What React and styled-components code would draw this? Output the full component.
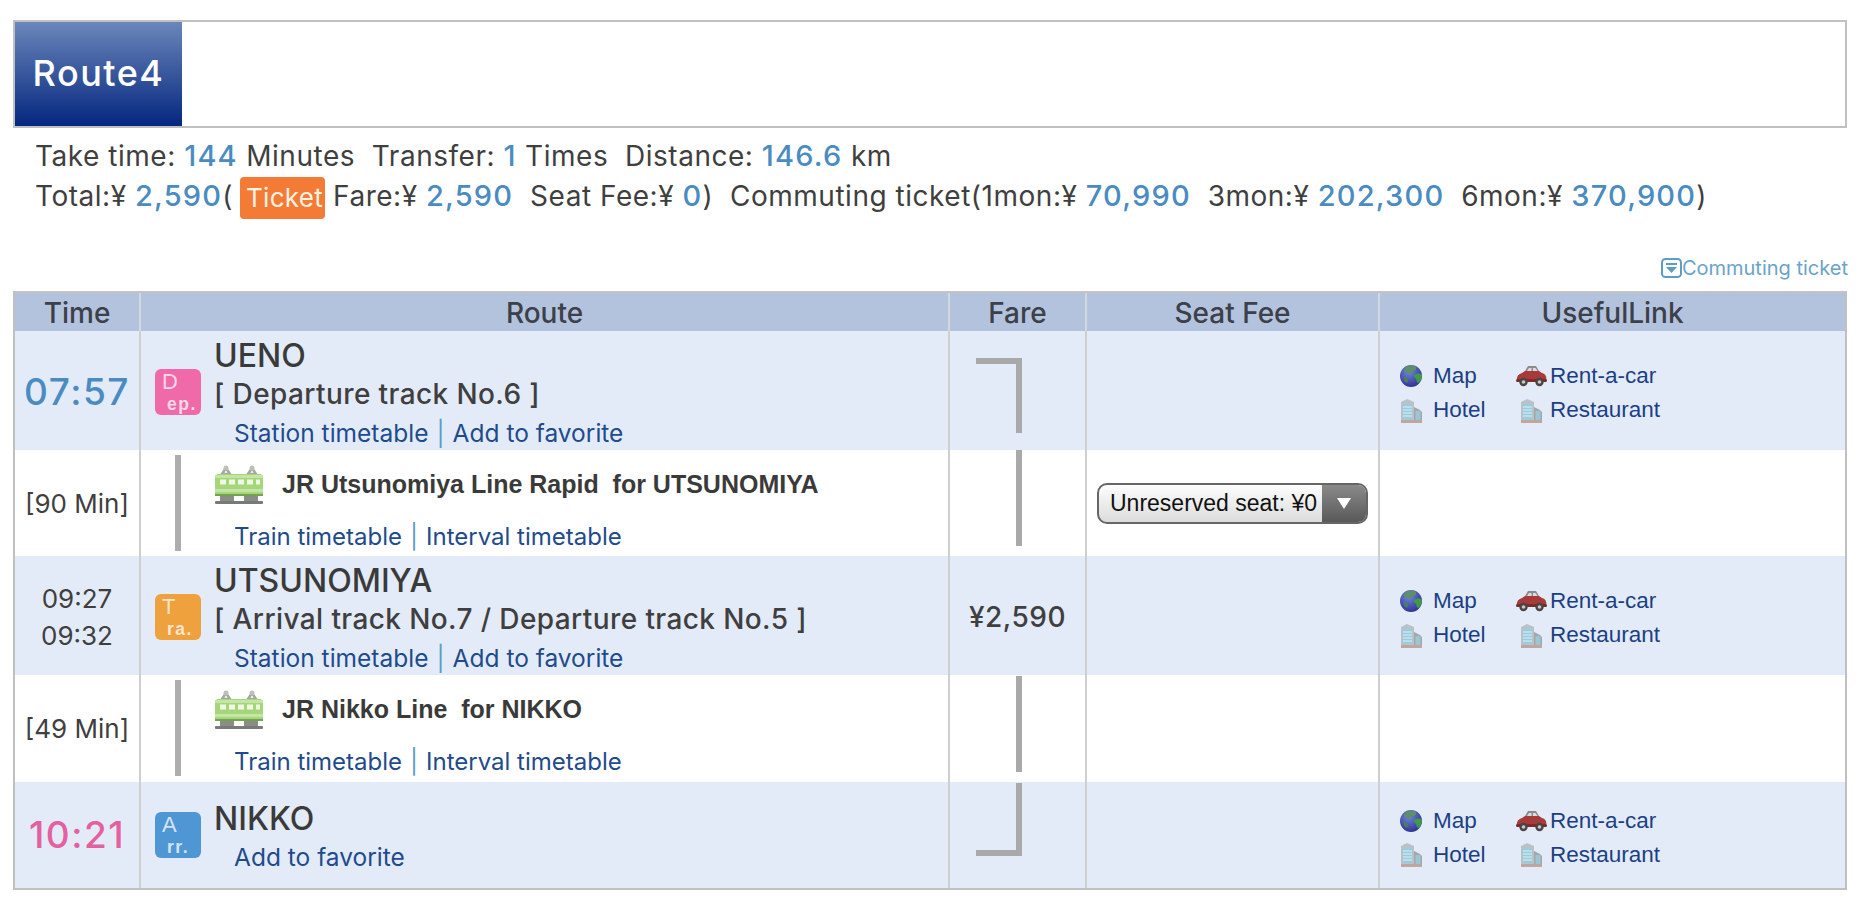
import styled, { createGlobalStyle } from "styled-components";

const GlobalStyle = createGlobalStyle`
  html, body {
    margin: 0;
    background: #fff;
  }
  body {
    font-family: Inter, "Noto Sans", "Noto Sans CJK JP", sans-serif;
    color: #3f3f3f;
  }
`;

const Globe = () => (
  <svg width="22" height="24" viewBox="0 0 22 24">
    <defs>
      <radialGradient id="sea" cx="40%" cy="30%" r="75%">
        <stop offset="0" stopColor="#6f86d8" />
        <stop offset="1" stopColor="#2c2f8f" />
      </radialGradient>
    </defs>
    <circle cx="11" cy="12" r="11" fill="url(#sea)" />
    <path d="M6 3c3-2 8-2 10 0 1 2-1 4-3 4s-1 3-3 3-3-2-5-2-1-3 1-5z" fill="#5f8f6a" />
    <path d="M14 11c3-2 6-2 8 0 0 4-2 7-4 8-2-1-1-4-3-5-1-1-2-2-1-3z" fill="#3f9a4a" />
    <path d="M4 13c2 0 4 1 4 3s-1 2-1 3c-2-1-4-3-3-6z" fill="#4c7f5c" />
  </svg>
);

const Car = () => (
  <svg width="31" height="22" viewBox="0 0 31 22">
    <path d="M9 6l3-5h8l3 5z" fill="#8d8a8a" />
    <path d="M11 6l2-3h2.500v3zM17 6V3h2.500l2 3z" fill="#d5dde6" />
    <path d="M1 17c-1-5 1-8 5-9l3-2h14l3 2c4 1 5 4 4 9z" fill="#a83a3a" />
    <rect x="0" y="14" width="31" height="3" rx="1.500" fill="#7c2a2a" />
    <circle cx="7.500" cy="17" r="4.200" fill="#4a4444" />
    <circle cx="7.500" cy="17" r="1.800" fill="#c9c9c9" />
    <circle cx="23.500" cy="17" r="4.200" fill="#4a4444" />
    <circle cx="23.500" cy="17" r="1.800" fill="#c9c9c9" />
  </svg>
);

const Building = () => (
  <svg width="23" height="25" viewBox="0 0 23 25">
    <path d="M14 9l6 3 2 2v10h-8z" fill="#a5a7a6" />
    <rect x="15.500" y="13" width="5" height="9" fill="#9cc6d6" />
    <path d="M1 4l6-3 7 3v20H1z" fill="#b9c2c6" />
    <rect x="3" y="6" width="9" height="15" fill="#9accdf" />
    <path d="M3 9h9M3 12h9M3 15h9M3 18h9" stroke="#dfeef5" strokeWidth="1" />
    <rect x="1" y="22" width="21" height="3" fill="#bfa79f" />
  </svg>
);

const Train = () => (
  <svg width="48" height="40" viewBox="0 0 48 40">
    <path d="M7 9l4-6 4 6zM33 9l4-6 4 6z" fill="none" stroke="#a3a8a1" strokeWidth="2.500" />
    <circle cx="11" cy="3" r="2.500" fill="#bcc0ba" />
    <circle cx="37" cy="3" r="2.500" fill="#bcc0ba" />
    <path d="M2 9h44l2 3v19H0V12z" fill="#a5d67a" />
    <rect x="0" y="10" width="48" height="3" fill="#c4e6a4" />
    <path d="M5 14.500h6v5H5zM14 14.500h6v5h-6zM23 14.500h6v5h-6zM32 14.500h6v5h-6zM41 14.500h4v5h-4z" fill="#f0f7e6" />
    <rect x="0" y="24" width="48" height="3" fill="#c4e6a4" />
    <rect x="0" y="29" width="48" height="2" fill="#74a350" />
    <path d="M5 31h14v5H5zM29 31h14v5H29z" fill="#8a8c86" />
    <rect x="0" y="36" width="48" height="3" rx="1" fill="#77797a" />
  </svg>
);

const TicketIcon = () => (
  <svg width="21" height="20" viewBox="0 0 21 20">
    <rect x="1" y="1" width="19" height="18" rx="3.500" fill="#fff" stroke="#5f9cc4" strokeWidth="2" />
    <rect x="5" y="5" width="11" height="2" fill="#5f9cc4" />
    <path d="M5 9h11l-5.500 6z" fill="#5f9cc4" />
  </svg>
);

const Page = styled.div`
  width: 1865px;
  height: 901px;
  padding: 20px 18px 0 13px;
  box-sizing: border-box;
  overflow: hidden;
`;

const Banner = styled.div`
  height: 104px;
  border: 2px solid #c0c0c0;
  display: flex;
`;

const RouteTitle = styled.h2`
  margin: 0;
  width: 167px;
  padding-bottom: 2px;
  box-sizing: border-box;
  background: linear-gradient(#6a86ba, #04277f);
  color: #fff;
  font-size: 36px;
  font-weight: 500;
  letter-spacing: 1.500px;
  display: flex;
  align-items: center;
  justify-content: center;
`;

const Summary = styled.div`
  padding: 8px 0 0 22px;
  font-size: 28px;
  letter-spacing: 0.520px;
  white-space: pre;
`;

const SummaryLine = styled.div`
  height: 40px;
  line-height: 40px;
`;

const Num = styled.span`
  color: #4a8cc2;
  font-weight: 500;
  font-size: 29px;
  letter-spacing: 1.200px;
`;

const TicketBadge = styled.span`
  display: inline-block;
  background: #f37b36;
  color: #fff3e4;
  border-radius: 4px;
  height: 42px;
  line-height: 42px;
  font-size: 26px;
  letter-spacing: 0.300px;
  padding: 0 2px 0 6px;
  margin: 0 8px 0 7px;
  vertical-align: middle;
`;

const CommuteLink = styled.a`
  display: flex;
  justify-content: flex-end;
  align-items: center;
  height: 28px;
  margin: 38px -1px 9px 0;
  font-size: 20px;
  color: #6aa3c8;
`;

const Table = styled.div`
  border: 2px solid #c0c0c0;
  border-top-color: #c4c4c4;
`;

const Row = styled.div`
  display: grid;
  grid-template-columns: 124px 809px 137px 293px 1fr;
  height: ${(p) => p.$h}px;
  background: ${(p) => p.$bg || "#fff"};
`;

const HeadCell = styled.div`
  display: flex;
  align-items: center;
  justify-content: center;
  padding-top: 1px;
  font-size: 28px;
  font-weight: 500;
  color: #3c4048;
  border-left: ${(p) => (p.$first ? "none" : "2px solid #d3d7de")};
`;

const Cell = styled.div`
  border-left: ${(p) => (p.$first ? "none" : "2px solid #cfcfcf")};
  display: flex;
  min-width: 0;
`;

const TimeCell = styled(Cell)`
  flex-direction: column;
  align-items: center;
  justify-content: center;
`;

const BigTime = styled.span`
  font-size: 37px;
  font-weight: 500;
  letter-spacing: 1.500px;
  color: ${(p) => p.$color};
  line-height: 42px;
`;

const SmallTime = styled.span`
  font-size: 26px;
  line-height: 37px;
  white-space: nowrap;
`;

const StationCell = styled(Cell)`
  align-items: center;
  padding-left: 14px;
`;

const Badge = styled.div`
  width: 46px;
  height: 46px;
  border-radius: 6px;
  background: ${(p) => p.$bg};
  color: #ffffffc0;
  flex: none;
  margin-right: 13px;
  font-family: "Liberation Sans", sans-serif;
  box-sizing: border-box;
  padding-left: 7px;
`;

const BadgeBig = styled.div`
  font-size: 22px;
  line-height: 25px;
`;

const BadgeSmall = styled.div`
  font-size: 17.500px;
  line-height: 21px;
  font-weight: 700;
  letter-spacing: 1.500px;
  padding-left: 5px;
  white-space: nowrap;
`;

const StationInfo = styled.div`
  display: flex;
  flex-direction: column;
  padding-top: ${(p) => p.$pad}px;
`;

const StationName = styled.div`
  font-size: 32px;
  font-weight: 500;
  line-height: 39px;
  color: #3a3a3a;
`;

const Track = styled.div`
  font-size: 28px;
  font-weight: 500;
  letter-spacing: 0.400px;
  line-height: 39px;
  white-space: pre;
`;

const Links = styled.div`
  font-size: 24.500px;
  line-height: 39px;
  color: #1f4b8c;
  padding-left: 20px;
  white-space: pre;
`;

const TransitLinks = styled(Links)`
  font-size: 24px;
  padding-left: 19px;
`;

const Sep = styled.span`
  color: #5f9cc4;
  margin: 0 8px;
`;

const TransitCell = styled(Cell)`
  padding-left: 34px;
`;

const Rail = styled.div`
  width: 6px;
  height: 96px;
  margin-top: 5px;
  background: #adadad;
  flex: none;
  margin-right: 34px;
`;

const TransitInfo = styled.div`
  display: flex;
  flex-direction: column;
`;

const LineRow = styled.div`
  display: flex;
  align-items: center;
  height: 40px;
  margin-top: 15px;
  margin-bottom: 12px;
  gap: 19px;
`;

const LineName = styled.div`
  font-family: "Liberation Sans", sans-serif;
  font-size: 25px;
  font-weight: 700;
  color: #3a3a3a;
  white-space: pre;
  margin-bottom: 2px;
`;

const FareCell = styled(Cell)`
  justify-content: center;
  align-items: center;
  font-size: 28px;
  font-weight: 500;
  letter-spacing: 0.500px;
`;

const BracketCell = styled(Cell)`
  padding-left: 26px;
`;

const Bracket = styled.div`
  width: 46px;
  height: ${(p) => p.$h}px;
  margin-top: ${(p) => p.$top}px;
  box-sizing: border-box;
  border-right: 6px solid #a9a9a9;
  border-top: ${(p) => (p.$cap === "top" ? "6px solid #a9a9a9" : "none")};
  border-bottom: ${(p) => (p.$cap === "bottom" ? "6px solid #a9a9a9" : "none")};
`;

const SeatCell = styled(Cell)`
  align-items: center;
  padding: 1px 0 0 10px;
`;

const SeatSelect = styled.div`
  width: 271px;
  height: 41px;
  box-sizing: border-box;
  border: 2px solid #666;
  border-radius: 10px;
  overflow: hidden;
  display: flex;
  font-family: "Liberation Sans", sans-serif;
  font-size: 23px;
  color: #111;
  background: linear-gradient(#fdfdfd, #dcdcdc);
`;

const SeatLabel = styled.div`
  flex: 1;
  display: flex;
  align-items: center;
  padding-left: 11px;
  white-space: nowrap;
`;

const SeatArrow = styled.div`
  width: 44px;
  flex: none;
  background: linear-gradient(#8a8a8a, #595959);
  display: flex;
  align-items: center;
  justify-content: center;
  &::after {
    content: "";
    border-left: 7px solid transparent;
    border-right: 7px solid transparent;
    border-top: 11px solid #fff;
  }
`;

const LinkCell = styled(Cell)`
  align-items: center;
  padding: ${(p) => p.$pad}px 0 0 20px;
`;

const LinkGrid = styled.div`
  display: grid;
  grid-template-columns: 113px auto;
  row-gap: 7px;
  font-family: "Liberation Sans", sans-serif;
  font-size: 22.500px;
  color: #1c3f83;
`;

const LinkItem = styled.a`
  display: flex;
  align-items: center;
  height: 27px;
`;

const LinkIcon = styled.span`
  width: ${(p) => p.$w}px;
  flex: none;
  display: flex;
  justify-content: ${(p) => (p.$w > 33 ? "center" : "flex-start")};
`;

const UsefulLinks = ({ pad = 2 }) => (
  <LinkCell $pad={pad}>
    <LinkGrid>
      <LinkItem>
        <LinkIcon $w={33}><Globe /></LinkIcon>Map
      </LinkItem>
      <LinkItem>
        <LinkIcon $w={37}><Car /></LinkIcon>Rent-a-car
      </LinkItem>
      <LinkItem>
        <LinkIcon $w={33}><Building /></LinkIcon>Hotel
      </LinkItem>
      <LinkItem>
        <LinkIcon $w={37}><Building /></LinkIcon>Restaurant
      </LinkItem>
    </LinkGrid>
  </LinkCell>
);

const StationBadge = ({ big, small, bg }) => (
  <Badge $bg={bg}>
    <BadgeBig>{big}</BadgeBig>
    <BadgeSmall>{small}</BadgeSmall>
  </Badge>
);

const Transit = ({ name, minutes, children }) => (
  <>
    <TimeCell $first>
      <SmallTime>{minutes}</SmallTime>
    </TimeCell>
    <TransitCell>
      <Rail />
      <TransitInfo>
        <LineRow>
          <Train />
          <LineName>{name}</LineName>
        </LineRow>
        <TransitLinks>
          Train timetable<Sep>|</Sep>Interval timetable
        </TransitLinks>
      </TransitInfo>
    </TransitCell>
    {children}
  </>
);

const App = () => {
  return (
    <>
      <GlobalStyle />
      <Page>
        <Banner>
          <RouteTitle>Route4</RouteTitle>
        </Banner>
        <Summary>
          <SummaryLine>
            Take time: <Num>144</Num> Minutes{"  "}Transfer: <Num>1</Num> Times{"  "}Distance: <Num>146.6</Num> km
          </SummaryLine>
          <SummaryLine>
            Total:¥ <Num>2,590</Num>(<TicketBadge>Ticket</TicketBadge>Fare:¥ <Num>2,590</Num>{"  "}Seat Fee:¥ <Num>0</Num>){"  "}Commuting ticket(1mon:¥ <Num>70,990</Num>{"  "}3mon:¥ <Num>202,300</Num>{"  "}6mon:¥ <Num>370,900</Num>)
          </SummaryLine>
        </Summary>
        <CommuteLink>
          <TicketIcon />
          Commuting ticket
        </CommuteLink>
        <Table>
          <Row $h={38} $bg="#b3c3dd">
            <HeadCell $first>Time</HeadCell>
            <HeadCell>Route</HeadCell>
            <HeadCell>Fare</HeadCell>
            <HeadCell>Seat Fee</HeadCell>
            <HeadCell>UsefulLink</HeadCell>
          </Row>
          <Row $h={119} $bg="#e3ebf9">
            <TimeCell $first>
              <BigTime $color="#4a8cc2">07:57</BigTime>
            </TimeCell>
            <StationCell>
              <StationBadge big="D" small="ep." bg="#f069a8" />
              <StationInfo $pad={5}>
                <StationName>UENO</StationName>
                <Track>[ Departure track No.6 ]</Track>
                <Links>
                  Station timetable<Sep>|</Sep>Add to favorite
                </Links>
              </StationInfo>
            </StationCell>
            <BracketCell>
              <Bracket $h={75} $top={27} $cap="top" />
            </BracketCell>
            <Cell />
            <UsefulLinks />
          </Row>
          <Row $h={106}>
            <Transit minutes="[90 Min]" name="JR Utsunomiya Line Rapid  for UTSUNOMIYA">
              <BracketCell>
                <Bracket $h={96} $top={0} />
              </BracketCell>
              <SeatCell>
                <SeatSelect>
                  <SeatLabel>Unreserved seat: ¥0</SeatLabel>
                  <SeatArrow />
                </SeatSelect>
              </SeatCell>
              <Cell />
            </Transit>
          </Row>
          <Row $h={119} $bg="#e3ebf9">
            <TimeCell $first>
              <SmallTime>09:27</SmallTime>
              <SmallTime>09:32</SmallTime>
            </TimeCell>
            <StationCell>
              <StationBadge big="T" small="ra." bg="#eea13c" />
              <StationInfo $pad={5}>
                <StationName>UTSUNOMIYA</StationName>
                <Track>[ Arrival track No.7 / Departure track No.5 ]</Track>
                <Links>
                  Station timetable<Sep>|</Sep>Add to favorite
                </Links>
              </StationInfo>
            </StationCell>
            <FareCell>¥2,590</FareCell>
            <Cell />
            <UsefulLinks />
          </Row>
          <Row $h={107}>
            <Transit minutes="[49 Min]" name="JR Nikko Line  for NIKKO">
              <BracketCell>
                <Bracket $h={96} $top={1} />
              </BracketCell>
              <Cell />
              <Cell />
            </Transit>
          </Row>
          <Row $h={106} $bg="#e3ebf9">
            <TimeCell $first>
              <BigTime $color="#e4609f">10:21</BigTime>
            </TimeCell>
            <StationCell>
              <StationBadge big="A" small="rr." bg="#4f97d4" />
              <StationInfo $pad={5}>
                <StationName>NIKKO</StationName>
                <Links>Add to favorite</Links>
              </StationInfo>
            </StationCell>
            <BracketCell>
              <Bracket $h={73} $top={1} $cap="bottom" />
            </BracketCell>
            <Cell />
            <UsefulLinks pad={5} />
          </Row>
        </Table>
      </Page>
    </>
  );
};

export default App;
